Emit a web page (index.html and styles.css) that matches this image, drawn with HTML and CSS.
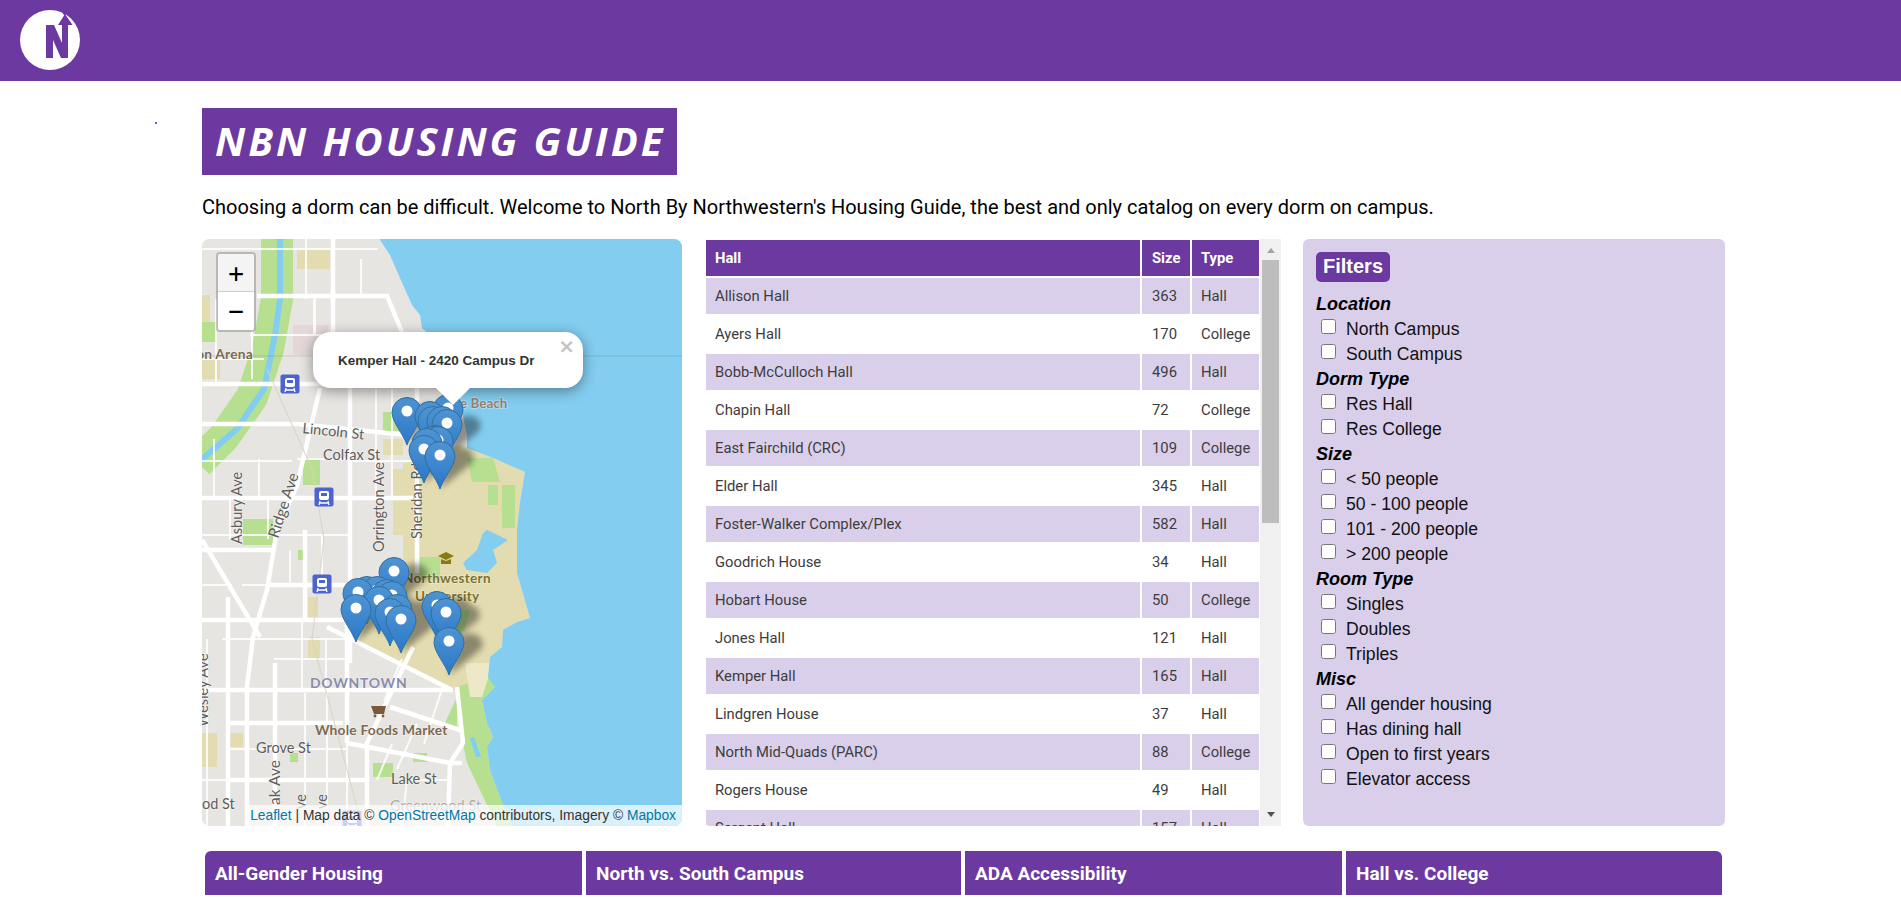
FILE: index.html
```html
<!DOCTYPE html>
<html lang="en">
<head>
  <meta charset="UTF-8" />
  <meta name="viewport" content="width=device-width, initial-scale=1" />
  <title>NBN Housing Guide</title>
  <link rel="stylesheet" href="styles.css">
</head>
<body>
  <header class="topbar">
    <svg class="logo" viewBox="0 0 60 60" width="60" height="60" aria-label="North by Northwestern">
      <circle cx="30" cy="30" r="30" fill="#fff"/>
      <path d="M45 5 L41.5 -1" stroke="#6b399f" stroke-width="2"/>
      <path d="M45 4 L52.5 15 L48 15 L48 48 L41 48 L33 30 L33 48 L26 48 L26 15 L34 15 L42 33 L42 15 L38 15 Z" fill="#6b399f"/>
    </svg>
  </header>

  <main class="page">
    <div class="title-row">
      <span class="stray-dot"></span>
      <h1 class="title">NBN HOUSING GUIDE</h1>
    </div>
    <p class="intro">Choosing a dorm can be difficult. Welcome to North By Northwestern's Housing Guide, the best and only catalog on every dorm on campus.</p>

    <section class="columns">
      <div class="map">
        <svg class="map-art" viewBox="0 0 480 587" width="480" height="587">
          <defs>
            <linearGradient id="pinFill" x1="0" y1="0" x2="0" y2="1">
              <stop offset="0" stop-color="#4f94d2"/>
              <stop offset="1" stop-color="#2b78c9"/>
            </linearGradient>
            <filter id="soft"><feGaussianBlur stdDeviation="0.5"/></filter>
            <filter id="shadowBlur" x="-30%" y="-30%" width="160%" height="160%"><feGaussianBlur stdDeviation="3"/></filter>
            <g id="pin">
              <path d="M0 34 C-3 24 -15 11 -15 1.5 A15 15 0 0 1 15 1.5 C15 11 3 24 0 34Z" fill="url(#pinFill)" stroke="#2f6f9f" stroke-width="1"/>
              <circle cx="0" cy="0" r="5.5" fill="#fff"/>
            </g>
            <path id="pinShadow" d="M0 34 L32 8 A12 10 0 0 0 10 -2 Z"/>
            <g id="train">
              <rect x="-9.5" y="-9.5" width="19" height="19" rx="2" fill="#4d63cf"/>
              <rect x="-5" y="-6" width="10" height="9" rx="2" fill="#fff"/>
              <rect x="-3" y="-4" width="6" height="3" fill="#4d63cf"/>
              <path d="M-5 6 H5 M-4 4 L-5 8 M4 4 L5 8" stroke="#fff" stroke-width="1.3"/>
            </g>
          </defs>

          <g filter="url(#soft)">
            <rect width="480" height="587" fill="#e7e5e1"/>

            <!-- parks and blocks -->
            <path d="M75 0 L75 60 L66 110 L50 158 L22 198 L-4 224" fill="none" stroke="#b6e08f" stroke-width="32"/>
            <path class="tan" d="M95 10 H128 V30 H95Z M0 56 H8 V83 H0Z M0 120 H18 V140 H0Z M181 200 H201 V216 H181Z M191 230 H220 V296 H191Z M106 358 H116 V378 H106Z M106 398 H118 V421 H106Z M0 494 H15 V528 H0Z M28 494 H41 V508 H28Z"/>
            <path class="green" d="M0 83 H15 V103 H0Z M181 173 H200 V192 H181Z M101 219 H118 V246 H101Z M41 280 H71 V306 H41Z M96 311 H103 V321 H96Z M171 524 H191 V538 H171Z M211 514 H225 V523 H211Z M88 514 H96 V523 H88Z M241 488 L255 458 V488Z"/>
            <path d="M91 86 H126 V116 H91Z" fill="#e3d7d8"/>
            <path class="tan" d="M201 225 L258 206 L265 209 L291 219 L323 233 L318 263 L315 334 L328 379 L315 383 L301 391 L300 408 L288 418 L286 438 L255 452 L151 404 L151 360 L201 325 Z"/>
            <path class="green" d="M265 219 L291 219 L298 243 L270 243Z M286 246 H296 V266 H286Z M300 246 H313 V289 H300Z M218 318 H238 V341 H218Z M240 365 L268 372 L262 392 L245 395Z M255 448 L288 438 L293 448 L280 461 L285 484 L291 498 L285 508 L288 531 L298 558 L311 587 L295 587 L265 524 L258 491Z"/>
            <path d="M263 424 L291 424 L280 458 L268 458Z" fill="#ece8c8"/>

            <!-- lake -->
            <path class="water" d="M176 -2 L188 16 L198 39 L210 66 L218 76 L220 89 L228 96 L240 130 L258 163 L265 196 L265 209 L291 219 L323 233 L318 263 L315 291 L315 334 L328 379 L315 383 L301 391 L300 408 L288 418 L286 438 L293 448 L280 461 L285 484 L291 498 L285 508 L288 531 L298 558 L311 590 L482 590 L482 -2 Z"/>
            <path class="water" d="M285 291 L306 301 L291 311 L295 324 L285 334 L265 331 L261 324 L275 311 L281 294Z M268 499 L272 498 L279 518 L274 518Z"/>
            <path d="M78 0 L78 60 L73 96 L62 150 L35 190 L-2 222" fill="none" stroke="#83cdf0" stroke-width="6"/>

            <!-- roads -->
            <path class="road-minor" d="M0 10 H176 M104 0 V60 M113 58 V96 M159 20 V58 M14 60 V144 M48 96 H122 M0 120 H62 M112 60 V96 M50 60 V140 M148 96 H210 M12 200 V259 M57 220 V259 M95 220 H148 M174 150 V259 M190 150 V259 M148 222 H215 M0 222 H90 M28 259 V300 M66 259 V300 M0 296 H146 M120 296 V346 M88 311 V346 M40 346 H65 M100 381 V451 M124 400 V451 M20 400 H145 M0 346 H30 M72 420 H145 M25 510 H145 M200 420 L182 462 M240 450 L222 505 M215 485 L195 530 M103 454 V587 M125 454 V587 M190 505 L175 541 M205 541 H248 M205 541 L200 587 M145 504 V587 M0 541 H25 M5 400 V587"/>
            <path class="road-major" d="M131 0 V96 M55 57 H185 L200 93 M0 145 H205 M0 185 H95 L205 196 M118 149 L95 246 L75 291 L65 351 L51 398 L45 448 V587 M0 259 H211 M148 149 V424 M215 130 V334 M0 301 L58 398 M0 311 H71 M65 346 H145 M0 381 H145 M0 451 H251 M125 388 L250 451 M211 408 L165 504 V587 M188 468 L258 491 M145 504 L248 524 M25 484 H141 M25 541 H165 M26 358 V587 M73 424 V587 M103 291 V381 M145 381 V504 M255 448 L261 504 L248 524 L246 587 M248 524 H260"/>
            <path d="M65 130 L110 230 L122 300 L110 400 L160 587" fill="none" stroke="#d9d2c3" stroke-width="1.2" opacity=".8"/>
            <path d="M0 117 H480" stroke="#000" stroke-opacity=".12" stroke-width="1"/>
          </g>

          <!-- labels -->
          <g class="map-labels">
            <text x="51" y="120" text-anchor="end" class="lb-place">on Arena</text>
            <text x="258" y="169" class="lb-beach">e Beach</text>
            <text x="100" y="194" transform="rotate(6 100 194)" class="lb-street">Lincoln St</text>
            <text x="121" y="221" class="lb-street">Colfax St</text>
            <text transform="translate(40 305) rotate(-90)" class="lb-street">Asbury Ave</text>
            <text transform="translate(76 300) rotate(-72)" class="lb-street lb-big">Ridge Ave</text>
            <text transform="translate(182 313) rotate(-90)" class="lb-street">Orrington Ave</text>
            <text transform="translate(220 300) rotate(-90)" class="lb-street">Sheridan Rd</text>
            <text x="201" y="344" class="lb-campus">Northwestern</text>
            <text x="213" y="362" class="lb-campus">University</text>
            <text x="108" y="449" class="lb-hood">DOWNTOWN</text>
            <text x="113" y="496" class="lb-place">Whole Foods Market</text>
            <text x="54" y="514" class="lb-street">Grove St</text>
            <text x="189" y="545" class="lb-street">Lake St</text>
            <text x="188" y="572" class="lb-street lb-faint">Greenwood St</text>
            <text x="0" y="570" class="lb-street">od St</text>
            <text transform="translate(78 566) rotate(-90)" class="lb-street lb-big">ak Ave</text>
            <text transform="translate(104 570) rotate(-90)" class="lb-street">ve</text>
            <text transform="translate(125 570) rotate(-90)" class="lb-street">ve</text>
            <text transform="translate(6 488) rotate(-90)" class="lb-street">Wesley Ave</text>
          </g>
          <path d="M244 313 L252 317 L244 321 L236 317Z M239 320 V325 H249 V320 L244 322Z" fill="#8a7a12"/>
          <path d="M169 467 H184 L182 475 H172Z" fill="#7a5a3c"/>
          <circle cx="173" cy="477" r="1.4" fill="#7a5a3c"/>
          <circle cx="181" cy="477" r="1.4" fill="#7a5a3c"/>
          <use href="#train" x="88" y="145"/>
          <use href="#train" x="122" y="258"/>
          <use href="#train" x="120" y="345"/>
          <use href="#train" x="150" y="581"/>

          <!-- marker shadows -->
          <g filter="url(#shadowBlur)" fill="#000" opacity=".38">
            <use href="#pinShadow" x="205" y="172"/>
            <use href="#pinShadow" x="245" y="184"/>
            <use href="#pinShadow" x="238" y="216"/>
            <use href="#pinShadow" x="222" y="210"/>
            <use href="#pinShadow" x="192" y="332"/>
            <use href="#pinShadow" x="177" y="361"/>
            <use href="#pinShadow" x="199" y="380"/>
            <use href="#pinShadow" x="195" y="369"/>
            <use href="#pinShadow" x="154" y="369"/>
            <use href="#pinShadow" x="244" y="373"/>
            <use href="#pinShadow" x="235" y="366"/>
            <use href="#pinShadow" x="247" y="402"/>
          </g>

          <!-- markers, north to south -->
          <use href="#pin" x="246" y="169"/>
          <use href="#pin" x="205" y="172"/>
          <use href="#pin" x="228" y="176"/>
          <use href="#pin" x="231" y="181"/>
          <use href="#pin" x="240" y="181"/>
          <use href="#pin" x="245" y="184"/>
          <use href="#pin" x="233" y="200"/>
          <use href="#pin" x="230" y="201"/>
          <use href="#pin" x="236" y="201"/>
          <use href="#pin" x="225" y="203"/>
          <use href="#pin" x="222" y="210"/>
          <use href="#pin" x="238" y="216"/>
          <use href="#pin" x="192" y="332"/>
          <use href="#pin" x="165" y="351"/>
          <use href="#pin" x="175" y="351"/>
          <use href="#pin" x="156" y="353"/>
          <use href="#pin" x="185" y="354"/>
          <use href="#pin" x="190" y="356"/>
          <use href="#pin" x="177" y="361"/>
          <use href="#pin" x="235" y="366"/>
          <use href="#pin" x="154" y="369"/>
          <use href="#pin" x="195" y="369"/>
          <use href="#pin" x="188" y="373"/>
          <use href="#pin" x="244" y="373"/>
          <use href="#pin" x="199" y="380"/>
          <use href="#pin" x="247" y="402"/>
        </svg>

        <div class="zoom-control">
          <button class="zoom-btn zoom-in">+</button>
          <button class="zoom-btn">&minus;</button>
        </div>

        <div class="popup">
          <span class="popup-text">Kemper Hall - 2420 Campus Dr</span>
          <span class="popup-close">&times;</span>
          <span class="popup-tip"></span>
        </div>

        <div class="attribution"><a>Leaflet</a> | Map data &copy; <a>OpenStreetMap</a> contributors, Imagery &copy; <a>Mapbox</a></div>
      </div>

      <div class="table-panel">
        <div class="table-scroll">
          <table class="hall-table">
            <thead>
              <tr><th class="col-hall">Hall</th><th class="col-size">Size</th><th>Type</th></tr>
            </thead>
            <tbody>
              <tr><td>Allison Hall</td><td>363</td><td>Hall</td></tr>
              <tr><td>Ayers Hall</td><td>170</td><td>College</td></tr>
              <tr><td>Bobb-McCulloch Hall</td><td>496</td><td>Hall</td></tr>
              <tr><td>Chapin Hall</td><td>72</td><td>College</td></tr>
              <tr><td>East Fairchild (CRC)</td><td>109</td><td>College</td></tr>
              <tr><td>Elder Hall</td><td>345</td><td>Hall</td></tr>
              <tr><td>Foster-Walker Complex/Plex</td><td>582</td><td>Hall</td></tr>
              <tr><td>Goodrich House</td><td>34</td><td>Hall</td></tr>
              <tr><td>Hobart House</td><td>50</td><td>College</td></tr>
              <tr><td>Jones Hall</td><td>121</td><td>Hall</td></tr>
              <tr><td>Kemper Hall</td><td>165</td><td>Hall</td></tr>
              <tr><td>Lindgren House</td><td>37</td><td>Hall</td></tr>
              <tr><td>North Mid-Quads (PARC)</td><td>88</td><td>College</td></tr>
              <tr><td>Rogers House</td><td>49</td><td>Hall</td></tr>
              <tr><td>Sargent Hall</td><td>157</td><td>Hall</td></tr>
            </tbody>
          </table>
        </div>
        <div class="scrollbar">
          <span class="scroll-btn"><span class="arrow-up"></span></span>
          <span class="scroll-thumb"></span>
          <span class="scroll-btn scroll-btn-end"><span class="arrow-down"></span></span>
        </div>
      </div>

      <form class="filters">
        <h2 class="filters-title">Filters</h2>

        <h3 class="filter-group">Location</h3>
        <label class="filter"><input type="checkbox">North Campus</label>
        <label class="filter"><input type="checkbox">South Campus</label>

        <h3 class="filter-group">Dorm Type</h3>
        <label class="filter"><input type="checkbox">Res Hall</label>
        <label class="filter"><input type="checkbox">Res College</label>

        <h3 class="filter-group">Size</h3>
        <label class="filter"><input type="checkbox">&lt; 50 people</label>
        <label class="filter"><input type="checkbox">50 - 100 people</label>
        <label class="filter"><input type="checkbox">101 - 200 people</label>
        <label class="filter"><input type="checkbox">&gt; 200 people</label>

        <h3 class="filter-group">Room Type</h3>
        <label class="filter"><input type="checkbox">Singles</label>
        <label class="filter"><input type="checkbox">Doubles</label>
        <label class="filter"><input type="checkbox">Triples</label>

        <h3 class="filter-group">Misc</h3>
        <label class="filter"><input type="checkbox">All gender housing</label>
        <label class="filter"><input type="checkbox">Has dining hall</label>
        <label class="filter"><input type="checkbox">Open to first years</label>
        <label class="filter"><input type="checkbox">Elevator access</label>
      </form>
    </section>

    <nav class="tabs">
      <div class="tab tab-first">All-Gender Housing</div>
      <div class="tab">North vs. South Campus</div>
      <div class="tab">ADA Accessibility</div>
      <div class="tab tab-last">Hall vs. College</div>
    </nav>
  </main>
</body>
</html>
```

FILE: styles.css
```css
html, body {
  margin: 0;
  padding: 0;
  height: 898px;
  overflow: hidden;
}

body {
  background: #fff;
  color: #000;
  font-family: 'Roboto', sans-serif;
}

.topbar {
  height: 81px;
  background: #6b399f;
  display: flex;
  align-items: center;
  padding-left: 20px;
  padding-bottom: 1px;
  box-sizing: border-box;
}

.logo {
  overflow: visible;
  margin-top: -1px;
}

.page {
  padding: 27px 0 0 202px;
}

.title-row {
  display: flex;
  margin-left: -47px;
}

.stray-dot {
  width: 2px;
  height: 2px;
  margin: 14px 45px 0 0;
  background: #2a1fe4;
  border-radius: 50%;
}

.title {
  margin: 0;
  height: 67px;
  line-height: 65px;
  padding: 0 12px 0 13px;
  background: #6b399f;
  color: #fff;
  font-family: 'Open Sans', sans-serif;
  font-size: 40px;
  font-weight: 700;
  font-style: italic;
  letter-spacing: 3px;
}

.intro {
  margin: 20px 0 20px;
  font-size: 20px;
  line-height: 24px;
  height: 24px;
  white-space: nowrap;
}

.columns {
  display: grid;
  grid-template-columns: 480px 577px 422px;
  column-gap: 22px;
  height: 587px;
}

/* map */
.map {
  position: relative;
  overflow: hidden;
  border-radius: 8px;
  background: #e7e5e1;
}

.map-art {
  display: block;
}

.tan { fill: #e3dcb0; }
.green { fill: #b6e08f; }
.water { fill: #83cdf0; }

.road-major {
  fill: none;
  stroke: #fff;
  stroke-width: 4.5;
}

.road-minor {
  fill: none;
  stroke: #fff;
  stroke-width: 2;
  opacity: 0.85;
}

.map-labels text {
  font-family: 'Lato', 'Roboto', sans-serif;
  font-size: 14.5px;
  paint-order: stroke;
  stroke: rgba(255, 255, 255, 0.4);
  stroke-width: 1.5px;
}

.map-labels .lb-street { fill: #5d5d5d; }
.map-labels .lb-big { font-size: 15.5px; }
.map-labels .lb-faint { fill: #aaa; }
.map-labels .lb-place { fill: #7d6a55; font-weight: 700; font-size: 13.8px; letter-spacing: 0.2px; }
.map-labels .lb-beach { fill: #9a7f6c; font-weight: 700; font-size: 13.5px; }
.map-labels .lb-campus { fill: #7b7232; font-weight: 700; font-size: 13.5px; letter-spacing: 0.3px; }
.map-labels .lb-hood { fill: #8b8cad; font-size: 14px; font-weight: 700; letter-spacing: 0.7px; }

.zoom-control {
  position: absolute;
  top: 13px;
  left: 14px;
  width: 36px;
  border: 2px solid rgba(0, 0, 0, 0.2);
  border-radius: 4px;
  background-clip: padding-box;
}

.zoom-btn {
  display: block;
  width: 36px;
  height: 38px;
  padding: 0;
  border: none;
  background: #fff;
  color: #000;
  font-family: 'DejaVu Sans Mono', 'Liberation Mono', monospace;
  font-size: 26px;
  line-height: 36px;
  border-radius: 0 0 2px 2px;
}

.zoom-in {
  background: #f4f4f4;
  border-bottom: 1px solid #ccc;
  border-radius: 2px 2px 0 0;
}

.popup {
  position: absolute;
  top: 93px;
  left: 111px;
  width: 270px;
  height: 56px;
  background: #fff;
  border-radius: 18px;
  box-shadow: 0 3px 14px rgba(0, 0, 0, 0.4);
  display: flex;
  align-items: center;
  font-family: 'Liberation Sans', sans-serif;
  color: #333;
}

.popup-text {
  position: relative;
  z-index: 1;
  margin: 0 0 0 25px;
  font-size: 13.5px;
  font-weight: 700;
  white-space: nowrap;
}

.popup-close {
  position: absolute;
  top: 4px;
  right: 8px;
  color: #c3c3c3;
  font-family: 'DejaVu Sans', sans-serif;
  font-size: 20px;
  font-weight: 700;
  line-height: 20px;
}

.popup-tip {
  position: absolute;
  left: 123px;
  bottom: -17px;
  width: 0;
  height: 0;
  border-left: 17px solid transparent;
  border-right: 17px solid transparent;
  border-top: 17px solid #fff;
}

.attribution {
  position: absolute;
  right: 0;
  bottom: 0;
  height: 21px;
  line-height: 21px;
  padding: 0 6px 0 2px;
  background: rgba(255, 255, 255, 0.7);
  color: #333;
  font-family: 'Liberation Sans', sans-serif;
  font-size: 13.8px;
  white-space: nowrap;
}

.attribution a {
  color: #0078a8;
}

/* table */
.table-panel {
  display: flex;
  height: 587px;
}

.table-scroll {
  width: 556px;
  overflow: hidden;
  border-radius: 0 0 0 6px;
}

.hall-table {
  width: 557px;
  margin-top: -1px;
  border-spacing: 2px;
  table-layout: fixed;
  font-size: 14.8px;
}

.col-hall { width: 434px; }
.col-size { width: 48px; }

.hall-table th,
.hall-table td {
  height: 36px;
  padding: 0 0 0 9px;
  box-sizing: border-box;
  text-align: left;
  white-space: nowrap;
}

.hall-table th {
  background: #6b399f;
  color: #fff;
  font-weight: 700;
}

.hall-table td {
  color: #3c3c3c;
}

.hall-table td:nth-child(2),
.hall-table th:nth-child(2) {
  padding-left: 10px;
}

.hall-table tbody tr:nth-child(odd) td {
  background: #dacfeb;
}

.scrollbar {
  width: 21px;
  background: #f0f0f0;
  display: flex;
  flex-direction: column;
}

.scroll-btn {
  height: 21px;
  display: flex;
  justify-content: center;
  padding-top: 9px;
  box-sizing: border-box;
}

.scroll-btn-end {
  margin-top: auto;
  padding-top: 7px;
}

.scroll-thumb {
  height: 263px;
  margin: 0 2px;
  background: #bdbdbd;
}

.arrow-up,
.arrow-down {
  width: 0;
  height: 0;
  border-left: 4.5px solid transparent;
  border-right: 4.5px solid transparent;
}

.arrow-up { border-bottom: 5px solid #a3a3a3; }
.arrow-down { border-top: 5px solid #505050; }

/* filters */
.filters {
  padding: 13px;
  background: #dacfeb;
  border-radius: 6px;
  box-sizing: border-box;
  font-family: 'Liberation Sans', sans-serif;
  font-size: 17.6px;
  line-height: 25px;
  color: #111;
}

.filters-title {
  display: inline-block;
  margin: 0 0 10px;
  padding: 0 7px;
  height: 30px;
  line-height: 29px;
  background: #6b399f;
  color: #fff;
  font-size: 20px;
  font-weight: 700;
  border-radius: 5px;
  vertical-align: top;
}

.filter-group {
  margin: 0;
  font-size: 18px;
  font-weight: 700;
  font-style: italic;
  color: #000;
}

.filter {
  display: flex;
  align-items: flex-start;
}

.filter input {
  width: 15px;
  height: 15px;
  margin: 2px 10px 0 5px;
}

/* tabs */
.tabs {
  display: grid;
  grid-template-columns: 377px 375px 377px 376px;
  column-gap: 4px;
  margin: 25px 0 0 3px;
}

.tab {
  height: 44px;
  line-height: 45px;
  padding-left: 10px;
  background: #6b399f;
  color: #fff;
  font-size: 19px;
  font-weight: 700;
}

.tab-first { border-radius: 6px 0 0 0; }
.tab-last { border-radius: 0 6px 0 0; }
```
